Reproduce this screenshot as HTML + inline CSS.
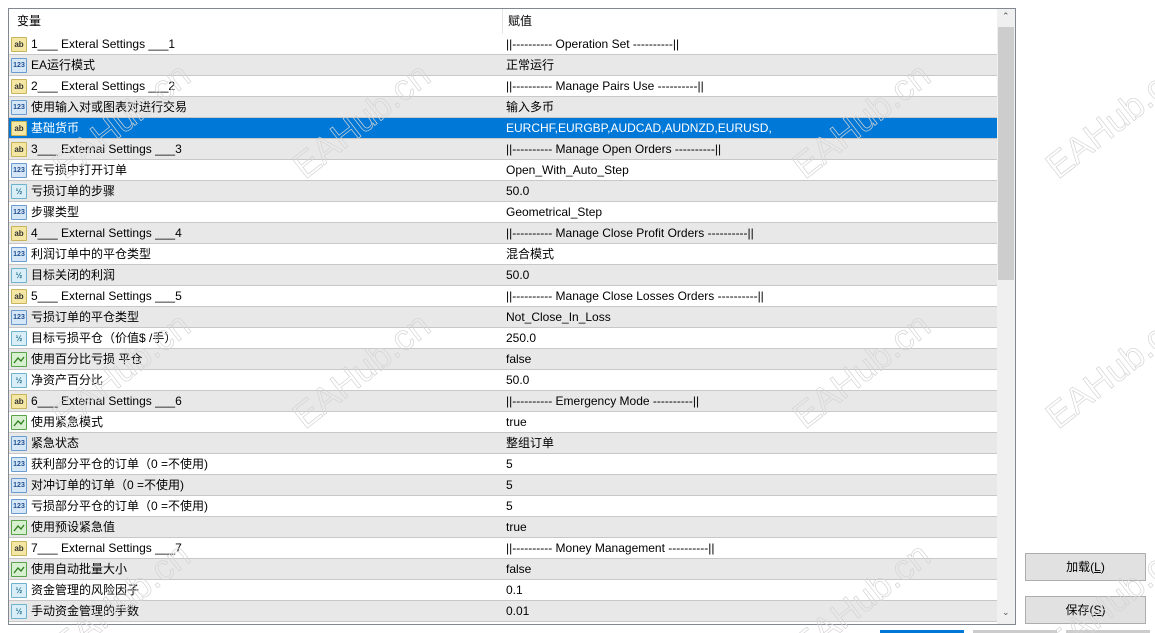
<!DOCTYPE html>
<html><head><meta charset="utf-8"><style>
*{margin:0;padding:0;box-sizing:border-box}
html,body{width:1155px;height:633px;overflow:hidden}
body{background:#fff;position:relative;font-family:"Liberation Sans","Noto Sans CJK SC",sans-serif;font-size:12px;color:#000}
.frame{position:absolute;left:8px;top:8px;width:1008px;height:617px;border:1px solid #828790;background:#fff;overflow:hidden}
.hdr{position:absolute;left:0;top:0;width:988px;height:25px;background:#fff}
.hdr span{position:absolute;top:0;line-height:25px}
.hdiv{position:absolute;left:493px;top:0;width:1px;height:25px;background:#e5e5e5}
.row{position:absolute;left:0;width:988px;height:21px;border-bottom:1px solid #c8c8c8;white-space:nowrap;line-height:20px}
.row.g{background:#e8e8e8}
.row.sel{background:#0078d7;color:#fff}
.row .n{position:absolute;left:22px;top:0}
.row .v{position:absolute;left:497px;top:0}
.ic{position:absolute;left:2px;top:3px;width:16px;height:15px;border-radius:1px;font-size:8px;font-weight:bold;line-height:13px;text-align:center}
.ab{background:#f3e7a3;border:1px solid #c8b45a;color:#333}
.n123{background:#d5e6f7;border:1px solid #6b9cd0;color:#1f4f8f;font-size:7px}
.half{background:#d9eef6;border:1px solid #6fb2cc;color:#1f6f8f;font-size:8px}
.gr{background:#d7f0cf;border:1px solid #5ca24c}
.sb{position:absolute;left:988px;top:0;width:18px;height:615px;background:#f0f0f0}
.thumb{position:absolute;left:1px;top:18px;width:16px;height:253px;background:#cdcdcd}
.btn{position:absolute;left:1025px;width:121px;height:28px;background:#e1e1e1;border:1px solid #adadad;text-align:center;line-height:26px;font-size:12px}
svg.wm{position:absolute;left:0;top:0}
</style></head><body>
<div class="frame">
<div class="hdr"><span style="left:8px">变量</span><div class="hdiv"></div><span style="left:499px">赋值</span></div>
<div id="rows"></div>
<div class="sb"><div style="position:absolute;left:5px;top:2px;font-size:9px;color:#555">&#8963;</div><div class="thumb"></div><div style="position:absolute;left:5px;top:598px;font-size:9px;color:#555">&#8964;</div></div>
</div>
<div class="btn" style="top:553px">加载(<u>L</u>)</div>
<div class="btn" style="top:596px">保存(<u>S</u>)</div>
<div style="position:absolute;left:880px;top:630px;width:84px;height:3px;background:#0078d7"></div>
<div style="position:absolute;left:973px;top:630px;width:84px;height:3px;background:#ccc"></div>
<div style="position:absolute;left:1066px;top:630px;width:84px;height:3px;background:#ccc"></div>
<svg class="wm" width="1155" height="633" style="pointer-events:none">
<g font-family="Liberation Sans,sans-serif" font-size="36" fill="none" stroke="#d4d4d4" stroke-width="0.7">
<text transform="translate(305,180) rotate(-38)">EAHub.cn</text>
<text transform="translate(805,180) rotate(-38)">EAHub.cn</text>
<text transform="translate(1058,180) rotate(-38)">EAHub.cn</text>
<text transform="translate(305,430) rotate(-38)">EAHub.cn</text>
<text transform="translate(805,430) rotate(-38)">EAHub.cn</text>
<text transform="translate(1058,430) rotate(-38)">EAHub.cn</text>
<text transform="translate(65,180) rotate(-38)">EAHub.cn</text>
<text transform="translate(65,430) rotate(-38)">EAHub.cn</text>
<text transform="translate(65,660) rotate(-38)">EAHub.cn</text>
<text transform="translate(805,660) rotate(-38)">EAHub.cn</text>
<text transform="translate(1058,660) rotate(-38)">EAHub.cn</text>
</g></svg>
<script>
var d=[
["ab","1___ Exteral Settings ___1","||---------- Operation Set ----------||"],
["n","EA运行模式","正常运行"],
["ab","2___ Exteral Settings ___2","||---------- Manage Pairs Use ----------||"],
["n","使用输入对或图表对进行交易","输入多币"],
["ab","基础货币","EURCHF,EURGBP,AUDCAD,AUDNZD,EURUSD,"],
["ab","3___ External Settings ___3","||---------- Manage Open Orders ----------||"],
["n","在亏损中打开订单","Open_With_Auto_Step"],
["h","亏损订单的步骤","50.0"],
["n","步骤类型","Geometrical_Step"],
["ab","4___ External Settings ___4","||---------- Manage Close Profit Orders ----------||"],
["n","利润订单中的平仓类型","混合模式"],
["h","目标关闭的利润","50.0"],
["ab","5___ External Settings ___5","||---------- Manage Close Losses Orders ----------||"],
["n","亏损订单的平仓类型","Not_Close_In_Loss"],
["h","目标亏损平仓（价值$ /手）","250.0"],
["g","使用百分比亏损 平仓","false"],
["h","净资产百分比","50.0"],
["ab","6___ External Settings ___6","||---------- Emergency Mode ----------||"],
["g","使用紧急模式","true"],
["n","紧急状态","整组订单"],
["n","获利部分平仓的订单（0 =不使用)","5"],
["n","对冲订单的订单（0 =不使用)","5"],
["n","亏损部分平仓的订单（0 =不使用)","5"],
["g","使用预设紧急值","true"],
["ab","7___ External Settings ___7","||---------- Money Management ----------||"],
["g","使用自动批量大小","false"],
["h","资金管理的风险因子","0.1"],
["h","手动资金管理的手数","0.01"]];
var h="";
d.forEach(function(r,i){
var c="row"+(i==4?" sel":(i%2?" g":""));
var ic=r[0]=="ab"?'<div class="ic ab">ab</div>':r[0]=="n"?'<div class="ic n123">123</div>':r[0]=="h"?'<div class="ic half">½</div>':'<div class="ic gr"><svg width="14" height="13" style="display:block"><path d="M2 10 L6 5 L9 8 L12 4" stroke="#2e7d1e" stroke-width="1.3" fill="none"/></svg></div>';
h+='<div class="'+c+'" style="top:'+(25+21*i)+'px">'+ic+'<span class="n">'+r[1]+'</span><span class="v">'+r[2]+'</span></div>';
});
document.getElementById("rows").innerHTML=h;
</script>
</body></html>
